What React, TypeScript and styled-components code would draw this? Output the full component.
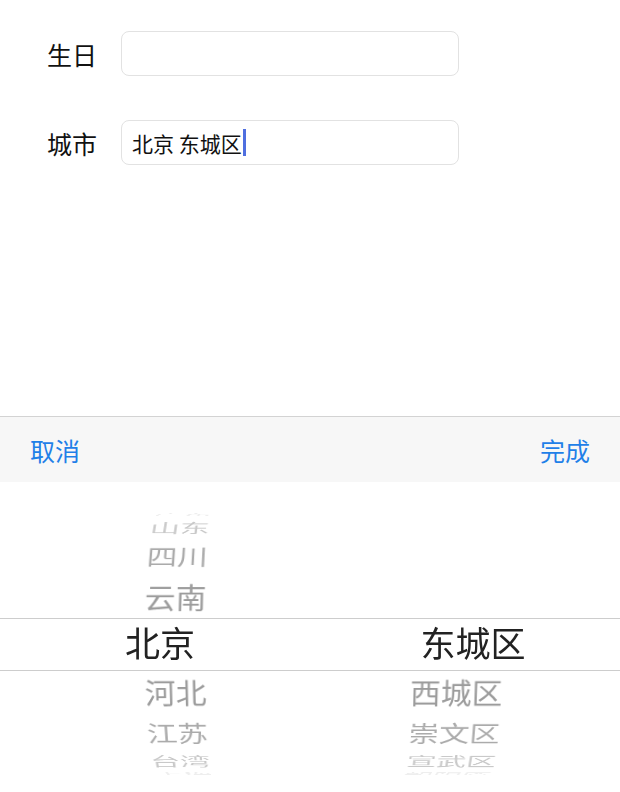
import React from 'react';
import styled, { createGlobalStyle } from 'styled-components';

const RADIUS = 140;
const STEP = 20;

const GlobalStyle = createGlobalStyle`
  html, body {
    margin: 0;
    padding: 0;
    height: 792px;
    overflow: hidden;
    background: #ffffff;
    font-family: "Noto Sans CJK SC", "Noto Sans", sans-serif;
  }
`;

const Page = styled.div`
  height: 792px;
  display: flex;
  flex-direction: column;
`;

const Form = styled.div`
  display: flex;
  flex-direction: column;
  gap: 44px;
  padding: 31px 0 0 47px;
`;

const Row = styled.div`
  display: flex;
  align-items: center;
  height: 45px;
`;

const Label = styled.span`
  width: 74px;
  font-size: 25px;
  color: #111;
`;

const Field = styled.div`
  box-sizing: border-box;
  width: 338px;
  height: 45px;
  border: 1px solid #e2e2e2;
  border-radius: 8px;
  display: flex;
  align-items: center;
  padding-left: 10px;
  font-size: 21px;
  color: #111;
`;

const Caret = styled.span`
  display: inline-block;
  width: 3px;
  height: 27px;
  margin-left: 1px;
  background: #4f6fe0;
`;

const Sheet = styled.div`
  margin-top: auto;
  display: flex;
  flex-direction: column;
`;

const Toolbar = styled.div`
  height: 65px;
  border-top: 1px solid #d3d3d3;
  background: #f7f7f7;
  display: flex;
  align-items: center;
  justify-content: space-between;
  padding: 0 30px;
`;

const ToolButton = styled.span`
  font-size: 25px;
  color: #1f80e8;
`;

const Picker = styled.div`
  position: relative;
  height: 310px;
  display: flex;
  overflow: hidden;
  background: #ffffff;
  perspective: 1800px;
  perspective-origin: 310px 162px;
`;

const Column = styled.div<{ $padLeft: number; $padRight: number }>`
  flex: 1;
  display: grid;
  padding: 14px ${p => p.$padRight}px 0 ${p => p.$padLeft}px;
  transform-style: preserve-3d;
`;

const Item = styled.div<{ $selected: boolean }>`
  grid-area: 1 / 1;
  align-self: center;
  height: 48px;
  line-height: 48px;
  text-align: center;
  white-space: nowrap;
  font-size: ${p => (p.$selected ? 35 : 31)}px;
  color: ${p => (p.$selected ? '#222222' : '#9c9c9c')};
  backface-visibility: hidden;
`;

const Band = styled.div`
  position: absolute;
  left: 0;
  right: 0;
  top: 136px;
  height: 51px;
  border-top: 1px solid #cdcdcd;
  border-bottom: 1px solid #cdcdcd;
  pointer-events: none;
`;

const fade = [1, 1, 0.85, 0.55, 0.18];

type WheelProps = {
  items: string[];
  selected: number;
  padLeft: number;
  padRight: number;
  shift: number;
};

const Wheel = ({ items, selected, padLeft, padRight, shift }: WheelProps) => (
  <Column $padLeft={padLeft} $padRight={padRight}>
    {items.map((text, i) => {
      const k = i - selected;
      if (Math.abs(k) > 4) return null;
      const angle = -k * STEP;
      const isSel = k === 0;
      return (
        <Item
          key={text}
          $selected={isSel}
          style={{
            transform: isSel
              ? `translate(${shift}px, -2px)`
              : `translateZ(-${RADIUS}px) rotateX(${angle}deg) translateZ(${RADIUS}px)`,
            opacity: fade[Math.abs(k)],
          }}
        >
          {text}
        </Item>
      );
    })}
  </Column>
);

const provinces = ['广东', '山东', '四川', '云南', '北京', '河北', '江苏', '台湾', '上海'];
const districts = ['东城区', '西城区', '崇文区', '宣武区', '朝阳区'];

export default function App() {
  return (
    <Page>
      <GlobalStyle />
      <Form>
        <Row>
          <Label>生日</Label>
          <Field />
        </Row>
        <Row>
          <Label>城市</Label>
          <Field>
            北京 东城区
            <Caret />
          </Field>
        </Row>
      </Form>
      <Sheet>
        <Toolbar>
          <ToolButton>取消</ToolButton>
          <ToolButton>完成</ToolButton>
        </Toolbar>
        <Picker>
          <Wheel items={provinces} selected={4} padLeft={34} padRight={0} shift={-15} />
          <Wheel items={districts} selected={0} padLeft={0} padRight={22} shift={16} />
          <Band />
        </Picker>
      </Sheet>
    </Page>
  );
}
